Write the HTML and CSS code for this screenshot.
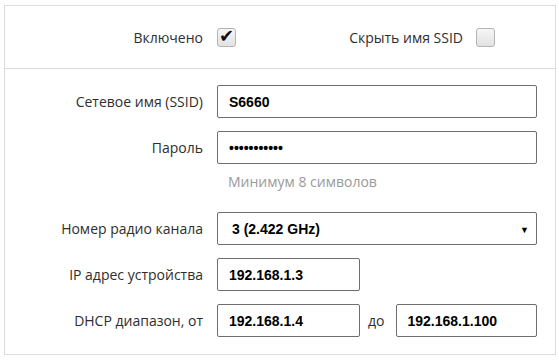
FILE: index.html
```html
<!DOCTYPE html>
<html lang="ru">
<head>
  <meta charset="UTF-8" />
  <meta name="viewport" content="width=device-width, initial-scale=1.0" />
  <title>Wi-Fi</title>
  <link rel="stylesheet" href="styles.css">
</head>
<body>
  <div class="panel">
    <!-- switches -->
    <div class="panel-top">
      <label class="row-label" for="enabled">Включено</label>
      <div class="switches">
        <input type="checkbox" id="enabled" class="check" checked>
        <label class="check-label" for="hidden">Скрыть имя SSID</label>
        <input type="checkbox" id="hidden" class="check">
      </div>
    </div>

    <!-- wireless settings -->
    <form class="panel-form">
      <label class="row-label" for="ssid">Сетевое имя (SSID)</label>
      <input type="text" id="ssid" class="field" value="S6660">

      <label class="row-label" for="pass">Пароль</label>
      <div class="field-group">
        <input type="password" id="pass" class="field" value="12345678901">
        <span class="hint">Минимум 8 символов</span>
      </div>

      <label class="row-label" for="channel">Номер радио канала</label>
      <div class="select-wrap">
        <select id="channel" class="field select">
          <option>3 (2.422 GHz)</option>
        </select>
      </div>

      <label class="row-label" for="ip">IP адрес устройства</label>
      <div class="range">
        <input type="text" id="ip" class="field short" value="192.168.1.3">
      </div>

      <label class="row-label" for="dhcp-from">DHCP диапазон, от</label>
      <div class="range">
        <input type="text" id="dhcp-from" class="field short" value="192.168.1.4">
        <label class="range-sep" for="dhcp-to">до</label>
        <input type="text" id="dhcp-to" class="field short last" value="192.168.1.100">
      </div>
    </form>
  </div>
</body>
</html>
```

FILE: styles.css
```css
:root {
  --panel-border: #dcdcdc;
  --text: #2e2e2e;
  --hint: #9a9a9a;
  --field-border: #6e6e6e;
}

html, body {
  margin: 0;
  background: #ffffff;
  color: var(--text);
  font-family: 'Open Sans', 'Noto Sans', sans-serif;
  font-size: 14px;
}

.panel {
  margin: 5px 4px;
  width: 550px;
  height: 348px;
  border: 1px solid var(--panel-border);
}

.panel-top,
.panel-form {
  display: grid;
  grid-template-columns: 198px 320px;
  column-gap: 14px;
  align-items: center;
}

.panel-top {
  height: 61px;
  padding-top: 1px;
  border-bottom: 1px solid var(--panel-border);
}

.panel-form {
  padding-top: 16px;
  row-gap: 13px;
}

.row-label {
  text-align: right;
  line-height: 19px;
}

.panel-form .row-label {
  align-self: start;
  padding-top: 7px;
}

.switches {
  display: flex;
  align-items: center;
}

.check-label {
  margin-left: auto;
  margin-right: 13px;
}

.check {
  appearance: none;
  -webkit-appearance: none;
  width: 19px;
  height: 19px;
  margin: 0 42px 0 0;
  border: 1px solid #b4b4b4;
  border-radius: 3px;
  background: linear-gradient(#f6f6f6, #e2e2e2);
  position: relative;
}

.check:first-child {
  margin-right: 0;
}

.check:checked::after {
  content: "\2714";
  position: absolute;
  left: 1px;
  top: -4px;
  font-family: 'DejaVu Sans', sans-serif;
  font-size: 18px;
  color: #111;
}

.field {
  box-sizing: border-box;
  width: 320px;
  height: 33px;
  margin: 0;
  padding: 0 11px;
  border: 1px solid var(--field-border);
  border-radius: 2px;
  background: #fff;
  color: #000;
  font-family: 'Liberation Sans', Arial, sans-serif;
  font-size: 14px;
  font-weight: 700;
  outline: none;
}

.field-group {
  display: flex;
  flex-direction: column;
}

.hint {
  color: var(--hint);
  padding: 8px 0 8px 11px;
  line-height: 19px;
}

.select-wrap {
  position: relative;
}

.select {
  appearance: none;
  -webkit-appearance: none;
  padding-left: 14px;
}

.select-wrap::after {
  content: "\25BC";
  position: absolute;
  right: 8px;
  top: 11px;
  font-size: 9px;
  color: #000;
  pointer-events: none;
}

.range {
  display: flex;
  align-items: center;
}

.short {
  width: 143px;
}

.short.last {
  width: 141px;
  padding-left: 10px;
}

.range-sep {
  margin: 0 12px 0 8px;
}
```
